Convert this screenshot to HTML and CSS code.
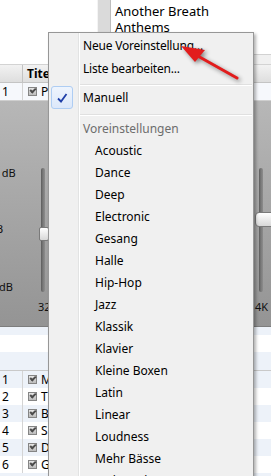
FILE: index.html
```html
<!DOCTYPE html>
<html>
  <head>
    <meta charset="utf-8" />
    <title>Equalizer</title>
    <link rel="stylesheet" href="styles.css">
  </head>
  <body>
    <div id="main">
      <div class="top">
        <div class="pane">
          <div class="pane-list">
            <div class="strip"></div>
            <ul class="songs">
              <li>Another Breath</li>
              <li>Anthems</li>
            </ul>
          </div>
          <div class="pane-foot"></div>
        </div>
      </div>

      <div class="thead">
        <div class="c-num"></div>
        <div class="c-title">Titel</div>
      </div>
      <div class="tr first">
        <div class="c-num">1</div>
        <div class="c-title"><span class="cb"></span>P</div>
      </div>

      <div class="eq">
        <span class="db db-top">+12 dB</span>
        <span class="db db-mid">0 dB</span>
        <span class="db db-low">-12 dB</span>
        <div class="slider s-left"><div class="track"></div><div class="thumb"></div><span class="freq">32</span></div>
        <div class="slider s-right"><div class="track"></div><div class="thumb"></div><span class="freq">4K</span></div>
      </div>

      <div class="rows">
        <div class="tr part blue"></div>
        <div class="tr"></div>
        <div class="tr blue tall"></div>
        <div class="tr blue"><div class="c-num">1</div><div class="c-title"><span class="cb"></span>M</div></div>
        <div class="tr"><div class="c-num">2</div><div class="c-title"><span class="cb"></span>T</div></div>
        <div class="tr blue"><div class="c-num">3</div><div class="c-title"><span class="cb"></span>B</div></div>
        <div class="tr"><div class="c-num">4</div><div class="c-title"><span class="cb"></span>S</div></div>
        <div class="tr blue"><div class="c-num">5</div><div class="c-title"><span class="cb"></span>D</div></div>
        <div class="tr"><div class="c-num">6</div><div class="c-title"><span class="cb"></span>G</div></div>
        <div class="tr blue"></div>
      </div>
    </div>

    <div class="menu">
      <div class="item top-item">Neue Voreinstellung...</div>
      <div class="item top-item">Liste bearbeiten...</div>
      <div class="sep"></div>
      <div class="item checked">
        <span class="check">
          <svg width="12" height="12" viewBox="0 0 12 12"><path d="M2 6.5 L5 9.5 L10.5 2" fill="none" stroke="#1f3fa8" stroke-width="1.8"/></svg>
        </span>
        Manuell
      </div>
      <div class="sep sep2"></div>
      <div class="item head">Voreinstellungen</div>
      <div class="item preset">Acoustic</div>
      <div class="item preset">Dance</div>
      <div class="item preset">Deep</div>
      <div class="item preset">Electronic</div>
      <div class="item preset">Gesang</div>
      <div class="item preset">Halle</div>
      <div class="item preset">Hip-Hop</div>
      <div class="item preset">Jazz</div>
      <div class="item preset">Klassik</div>
      <div class="item preset">Klavier</div>
      <div class="item preset">Kleine Boxen</div>
      <div class="item preset">Latin</div>
      <div class="item preset">Linear</div>
      <div class="item preset">Loudness</div>
      <div class="item preset">Mehr Bässe</div>
      <div class="item preset">Mehr Höhen</div>
      <div class="item preset">Pop</div>
    </div>

    <svg class="arrow" width="271" height="476" viewBox="0 0 271 476">
      <line x1="237" y1="78" x2="196" y2="55" stroke="#e21c1c" stroke-width="3" stroke-linecap="round"/>
      <polygon points="181,46 205,50 195,62" fill="#e21c1c"/>
    </svg>
  </body>
</html>
```

FILE: styles.css
```css
html, body {
  margin: 0;
}
body {
  width: 271px;
  height: 476px;
  overflow: hidden;
  position: relative;
  background: #fff;
  font-family: "Noto Sans", "Open Sans", sans-serif;
  font-size: 12px;
  color: #000;
}

#main {
  display: flex;
  flex-direction: column;
}

/* upper song pane */
.top {
  height: 64px;
  display: flex;
  justify-content: flex-end;
}
.pane {
  width: 174px;
  display: flex;
  flex-direction: column;
}
.pane-list {
  height: 54px;
  display: flex;
  border-bottom: 1px solid #d2d2d2;
}
.strip {
  width: 12px;
  background: #dadada;
  border-left: 1px solid #f4f4f4;
  border-right: 1px solid #bdbdbd;
}
.songs {
  list-style: none;
  margin: 0;
  padding: 3px 0 0 4px;
  font-size: 13px;
}
.songs li {
  height: 16px;
  line-height: 16px;
}
.pane-foot {
  flex: 1;
  background: #f0f0f0;
}

/* table */
.thead {
  height: 17px;
  display: flex;
  border-top: 1px solid #d3d3d3;
  border-bottom: 1px solid #c4c4c4;
  background: linear-gradient(#f2f2f2, #dedede);
  font-weight: bold;
}
.c-num {
  width: 23px;
  padding-left: 2px;
  box-sizing: border-box;
  border-right: 1px solid #d4d4d4;
}
.thead .c-num {
  border-right-color: #c2c2c2;
}
.c-title {
  display: flex;
  align-items: center;
  padding-left: 5px;
}
.thead .c-title {
  padding-left: 4px;
}
.tr {
  height: 17px;
  display: flex;
  align-items: center;
  background: #fff;
}
.tr .c-num {
  height: 100%;
  display: flex;
  align-items: center;
}
.tr.first {
  background: #f6f8fc;
}
.tr.blue {
  background: #edf2f9;
}
.tr.part {
  height: 8px;
}
.tr.tall {
  height: 18px;
  border-bottom: 1px solid #c9c9c9;
}
.cb {
  width: 7px;
  height: 7px;
  margin-right: 4px;
  border: 1px solid #858585;
  background: linear-gradient(#e6e6e6, #bcbcbc);
  position: relative;
}
.cb::after {
  content: "";
  position: absolute;
  left: 1px;
  top: 0;
  width: 4px;
  height: 2px;
  border-left: 2px solid #4c4c4c;
  border-bottom: 2px solid #4c4c4c;
  transform: rotate(-45deg);
}

/* equalizer */
.eq {
  height: 225px;
  border-top: 1px solid #cfcfcf;
  border-bottom: 1px solid #7d7d7d;
  background: linear-gradient(#b7b7b7, #949494);
  position: relative;
  font-size: 11px;
  color: #101010;
}
.db {
  position: absolute;
  left: -20px;
}
.db-top { top: 64px; }
.db-mid { top: 120px; }
.db-low { top: 178px; }
.slider {
  position: absolute;
  top: 67px;
  width: 17px;
  height: 150px;
}
.s-left { left: 35px; }
.s-right { left: 255px; }
.track {
  position: absolute;
  left: 6px;
  top: 0;
  width: 4px;
  height: 124px;
  border-radius: 2px;
  background: linear-gradient(to right, #5c5c5c, #7a7a7a, #8c8c8c);
}
.s-right .track {
  left: 4px;
}
.thumb {
  position: absolute;
  left: 4px;
  top: 59px;
  width: 8px;
  height: 12px;
  border: 1px solid #7a7a7a;
  border-radius: 2px;
  background: linear-gradient(#ffffff, #d8d8d8);
}
.s-right .thumb {
  left: 0;
  top: 44px;
  width: 18px;
  height: 13px;
  border-radius: 4px 0 0 4px;
}
.freq {
  position: absolute;
  left: 3px;
  top: 131px;
}
.s-right .freq {
  left: 0;
}

/* popup menu */
.menu {
  position: absolute;
  left: 48px;
  top: 32px;
  width: 204px;
  height: 460px;
  padding-top: 1px;
  border: 1px solid #979797;
  background: linear-gradient(to right, #f0f0f0 29px, #e2e3e3 29px, #e2e3e3 30px, #fff 30px, #fff 31px, #f0f0f0 31px);
  box-shadow: 2px 2px 3px rgba(0, 0, 0, 0.3);
}
.item {
  height: 22px;
  display: flex;
  align-items: center;
  padding-left: 34px;
  white-space: nowrap;
}
.top-item {
  height: 23px;
  letter-spacing: -0.2px;
}
.sep {
  height: 1px;
  margin: 4px 1px 0 31px;
  background: #e0e0e0;
  border-bottom: 1px solid #fff;
}
.sep2 {
  margin-top: 5px;
  margin-bottom: 1px;
}
.checked {
  height: 23px;
  padding-left: 2px;
}
.check {
  width: 20px;
  height: 21px;
  margin-right: 10px;
  border: 1px solid #aecdf3;
  border-radius: 3px;
  background: linear-gradient(#eef4fd, #dce8fa);
  display: flex;
  align-items: center;
  justify-content: center;
}
.head {
  color: #6d6d6d;
}
.preset {
  padding-left: 46px;
}

.arrow {
  position: absolute;
  left: 0;
  top: 0;
  pointer-events: none;
  filter: drop-shadow(2px 2px 2px rgba(0, 0, 0, 0.45));
}
```
